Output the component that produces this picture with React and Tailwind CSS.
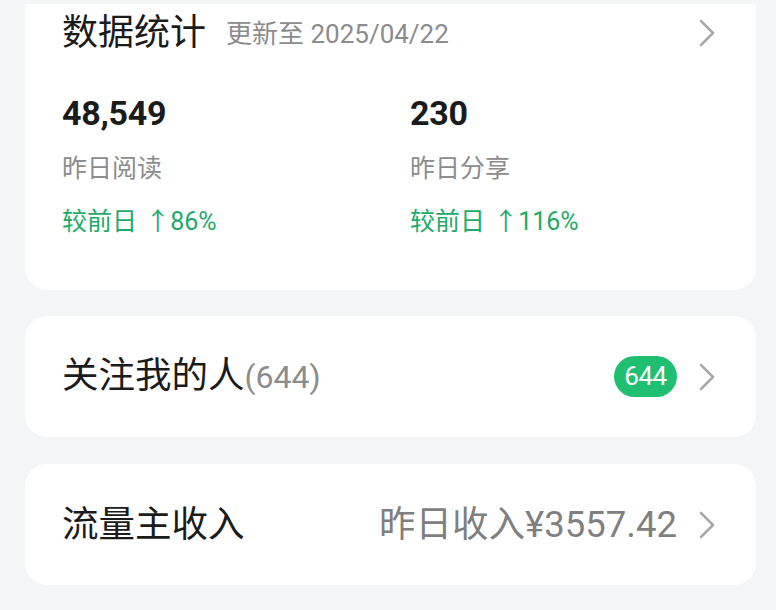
const font = { fontFamily: "Roboto, 'Noto Sans CJK SC', sans-serif" };

function Chevron() {
  return (
    <svg width="18" height="28" viewBox="0 0 18 28" className="shrink-0">
      <path d="M3 2 L15 14 L3 26" fill="none" stroke="#a9a9a9" strokeWidth="2.6" strokeLinecap="round" strokeLinejoin="round" />
    </svg>
  );
}

function Stat({ value, label, change }) {
  return (
    <div className="flex flex-col">
      <div className="text-[34px] font-bold leading-[40px] text-[#1b1b1b] tracking-[-0.3px]">{value}</div>
      <div className="mt-[21px] text-[25px] leading-[30px] text-[#8c8c8c]">{label}</div>
      <div className="mt-[23px] text-[25px] leading-[30px] text-[#1eab67]">
        较前日 <span className="ml-[2px]">↑{change}</span>
      </div>
    </div>
  );
}

export default function App() {
  return (
    <div className="w-[776px] h-[610px] overflow-hidden bg-[#f4f5f6] pl-[25px] pr-[20px] pt-[4px]" style={font}>
      <div className="bg-white rounded-b-[22px] h-[286px] pl-[37px] pr-[40px]">
        <div className="flex items-center h-[58px]">
          <span className="text-[36px] leading-[42px] text-[#1b1b1b]">数据统计</span>
          <span className="ml-[20px] text-[26px] leading-[30px] text-[#8c8c8c] mt-[2px]">
            更新至 2025/04/22
          </span>
          <div className="ml-auto">
            <Chevron />
          </div>
        </div>
        <div className="grid grid-cols-[348px_1fr] mt-[31px]">
          <Stat value="48,549" label="昨日阅读" change="86%" />
          <Stat value="230" label="昨日分享" change="116%" />
        </div>
      </div>

      <div className="mt-[26px] bg-white rounded-[22px] h-[121px] flex items-center pl-[37px] pr-[40px]">
        <span className="text-[36.5px] leading-[42px] text-[#1b1b1b]">
          关注我的人<span className="text-[32px] text-[#8c8c8c]">(644)</span>
        </span>
        <div className="ml-auto flex items-center gap-[21px]">
          <span className="h-[41px] w-[63px] rounded-full bg-[#1fbf71] text-white text-[26px] leading-[41px] text-center tracking-[-0.5px]">
            644
          </span>
          <Chevron />
        </div>
      </div>

      <div className="mt-[27px] bg-white rounded-[22px] h-[121px] flex items-center pl-[37px] pr-[40px]">
        <span className="text-[36.5px] leading-[42px] text-[#1b1b1b]">流量主收入</span>
        <div className="ml-auto flex items-center gap-[21px]">
          <span className="text-[36.5px] leading-[42px] text-[#7f7f7f]">昨日收入¥3557.42</span>
          <Chevron />
        </div>
      </div>
    </div>
  );
}
